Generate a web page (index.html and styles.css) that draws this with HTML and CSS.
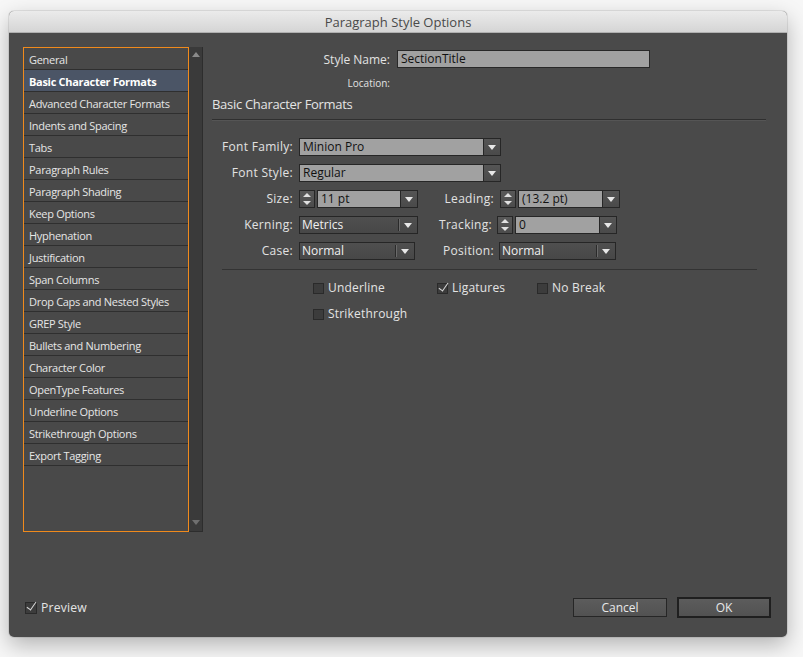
FILE: index.html
```html
<!DOCTYPE html>
<html>
<head>
<meta charset="utf-8">
<link rel="stylesheet" href="styles.css">
</head>
<body>
<div class="window">
  <div class="titlebar">Paragraph Style Options</div>
  <div class="body">
    <div class="top">
      <div class="sidebar">
        <ul class="list">
          <li>General</li>
          <li class="sel">Basic Character Formats</li>
          <li>Advanced Character Formats</li>
          <li>Indents and Spacing</li>
          <li>Tabs</li>
          <li>Paragraph Rules</li>
          <li>Paragraph Shading</li>
          <li>Keep Options</li>
          <li>Hyphenation</li>
          <li>Justification</li>
          <li>Span Columns</li>
          <li>Drop Caps and Nested Styles</li>
          <li>GREP Style</li>
          <li>Bullets and Numbering</li>
          <li>Character Color</li>
          <li>OpenType Features</li>
          <li>Underline Options</li>
          <li>Strikethrough Options</li>
          <li>Export Tagging</li>
        </ul>
        <div class="scroll">
          <span class="sarrow up"></span>
          <span class="sarrow down"></span>
        </div>
      </div>
      <div class="main">
        <div class="namerow">
          <span class="namelabel">Style Name:</span>
          <div class="nameinput">SectionTitle</div>
        </div>
        <div class="locrow">
          <span class="namelabel small">Location:</span>
        </div>
        <h2 class="heading">Basic Character Formats</h2>
        <div class="rule"></div>
        <div class="form">
          <span class="lbl">Font Family:</span>
          <div class="combo wide"><span class="val">Minion Pro</span><span class="arr"></span></div>

          <span class="lbl">Font Style:</span>
          <div class="combo wide"><span class="val">Regular</span><span class="arr"></span></div>

          <span class="lbl">Size:</span>
          <div class="spinwrap"><span class="spin"></span><div class="combo w101"><span class="val">11 pt</span><span class="arr"></span></div></div>
          <span class="lbl">Leading:</span>
          <div class="spinwrap"><span class="spin"></span><div class="combo w102"><span class="val">(13.2 pt)</span><span class="arr"></span></div></div>

          <span class="lbl">Kerning:</span>
          <div class="select w119"><span class="val">Metrics</span><span class="sep"></span><span class="arr"></span></div>
          <span class="lbl shiftl">Tracking:</span>
          <div class="spinwrap shift"><span class="spin"></span><div class="combo w102"><span class="val">0</span><span class="arr"></span></div></div>

          <span class="lbl">Case:</span>
          <div class="select w116"><span class="val">Normal</span><span class="sep"></span><span class="arr"></span></div>
          <span class="lbl">Position:</span>
          <div class="select w117 shift1"><span class="val">Normal</span><span class="sep"></span><span class="arr"></span></div>
        </div>
        <div class="rule2"></div>
        <div class="checks">
          <label class="cb"><span class="box"></span>Underline</label>
          <label class="cb lig"><span class="box on"></span>Ligatures</label>
          <label class="cb"><span class="box"></span>No Break</label>
          <label class="cb row2"><span class="box"></span>Strikethrough</label>
        </div>
      </div>
    </div>
    <div class="footer">
      <label class="cb preview"><span class="box on"></span>Preview</label>
      <div class="buttons">
        <button class="btn">Cancel</button>
        <button class="btn ok">OK</button>
      </div>
    </div>
  </div>
</div>
</body>
</html>
```

FILE: styles.css
```css
* { box-sizing: border-box; }
html, body { margin: 0; padding: 0; }
body {
  background: #f7f7f7;
  width: 803px;
  height: 657px;
  overflow: hidden;
  font-family: "Open Sans", "DejaVu Sans", sans-serif;
  color: #e2e2e2;
}
.window {
  margin: 11px 0 0 9px;
  width: 778px;
  height: 626px;
  border-radius: 5px;
  overflow: hidden;
  display: flex;
  flex-direction: column;
  box-shadow: 0 8px 22px rgba(0,0,0,0.28), 0 0 0 1px rgba(0,0,0,0.08);
  background: #4a4a4a;
}
.titlebar {
  height: 22px;
  background: linear-gradient(#ebebeb, #d5d5d5);
  border-bottom: 1px solid #b0b0b0;
  color: #4a4a4a;
  font-size: 13px;
  line-height: 22px;
  text-align: center;
}
.body {
  flex: 1;
  display: flex;
  flex-direction: column;
  padding: 14px 16px 19px 14px;
}
.top {
  display: flex;
  flex: 1;
}
.sidebar {
  width: 180px;
  height: 485px;
  display: flex;
  background: #333;
  border: 1px solid #2d2d2d;
  border-left: none;
  border-top: none;
}
.list {
  list-style: none;
  margin: 0;
  padding: 0;
  width: 166px;
  height: 485px;
  border: 1px solid #f08a1c;
  background: #494949;
}
.list li {
  height: 22px;
  padding-top: 2px;
  line-height: 19px;
  border-bottom: 1px solid #2f2f2f;
  padding-left: 5px;
  font-size: 11px;
  letter-spacing: -0.3px;
  color: #e6e6e6;
  white-space: nowrap;
}
.list li.sel {
  background: #4b5566;
  font-weight: 700;
  color: #fff;
}
.scroll {
  flex: 1;
  background: #3a3a3a;
  position: relative;
}
.sarrow {
  position: absolute;
  left: 3px;
  width: 0;
  height: 0;
  border-left: 4px solid transparent;
  border-right: 4px solid transparent;
}
.sarrow.up { top: 5px; border-bottom: 5px solid #8a8a8a; }
.sarrow.down { bottom: 6px; border-top: 5px solid #6f6f6f; }

.main {
  flex: 1;
  padding-top: 3px;
}
.namerow, .locrow {
  display: flex;
  align-items: center;
}
.namelabel {
  width: 187px;
  text-align: right;
  font-size: 12px;
  margin-right: 7px;
}
.namelabel.small { font-size: 10px; }
.nameinput {
  width: 253px;
  height: 18px;
  background: #a1a1a1;
  border: 1px solid #282828;
  color: #111;
  font-size: 12px;
  line-height: 16px;
  padding-left: 3px;
}
.locrow { margin-top: 8px; height: 14px; }
.heading {
  margin: 5px 0 0 9px;
  font-size: 13px;
  font-weight: 400;
  letter-spacing: -0.3px;
  line-height: 18px;
  color: #e4e4e4;
}
.rule {
  margin: 6px 5px 0 9px;
  background: #2f2f2f;
  border-bottom: 1px solid #555;
  height: 2px;
}
.form {
  margin: 17px 0 0 19px;
  display: grid;
  grid-template-columns: 71px 119px 70px auto;
  column-gap: 6px;
  row-gap: 8px;
  align-items: center;
}
.lbl {
  text-align: right;
  font-size: 12px;
  letter-spacing: 0.3px;
  white-space: nowrap;
  line-height: 18px;
}
.lbl.shiftl { margin-right: 2px; }
.combo, .select {
  height: 18px;
  display: flex;
  border: 1px solid #262626;
  font-size: 12px;
  line-height: 16px;
}
.combo { background: #a1a1a1; color: #111; }
.combo .val { flex: 1; padding-left: 3px; white-space: nowrap; }
.combo .arr, .select .arr {
  width: 17px;
  position: relative;
}
.combo .arr {
  background: linear-gradient(#555, #4a4a4a);
  border-left: 1px solid #262626;
}
.arr::after {
  content: "";
  position: absolute;
  left: 4px;
  top: 6px;
  border-left: 4px solid transparent;
  border-right: 4px solid transparent;
  border-top: 5px solid #e8e8e8;
}
.wide { grid-column: 2 / span 3; width: 202px; }
.w101 { width: 101px; }
.w102 { width: 102px; }
.w119 { width: 119px; }
.w116 { width: 116px; }
.w117 { width: 117px; }
.shift1 { margin-left: -1px; }
.select {
  background: linear-gradient(#4f4f4f, #474747);
  color: #f0f0f0;
}
.select .val { flex: 1; padding-left: 2px; }
.select .sep {
  width: 2px;
  margin: 2px 0;
  border-left: 1px solid #2a2a2a;
  border-right: 1px solid #6a6a6a;
}
.spinwrap { display: flex; gap: 2px; }
.spinwrap.shift { margin-left: -3px; }
.spin {
  width: 16px;
  height: 18px;
  border: 1px solid #262626;
  background: linear-gradient(#595959, #4c4c4c);
  position: relative;
}
.spin::before, .spin::after {
  content: "";
  position: absolute;
  left: 3px;
  border-left: 4px solid transparent;
  border-right: 4px solid transparent;
}
.spin::before { top: 2px; border-bottom: 4px solid #e0e0e0; }
.spin::after { bottom: 2px; border-top: 4px solid #e0e0e0; }
.rule2 {
  margin: 9px 0 0 19px;
  width: 535px;
  height: 1px;
  background: #333;
}
.checks {
  margin: 9px 0 0 110px;
  display: grid;
  grid-template-columns: 124px 100px auto;
  row-gap: 8px;
}
.cb {
  display: flex;
  align-items: center;
  gap: 4px;
  font-size: 12px;
  letter-spacing: 0.2px;
  line-height: 18px;
  color: #e4e4e4;
}
.row2 { grid-column: 1 / span 3; }
.box {
  width: 11px;
  height: 11px;
  background: #3c3c3c;
  border: 1px solid #2a2a2a;
  position: relative;
}
.box.on::after {
  content: "";
  position: absolute;
  left: 3px;
  top: -3px;
  width: 4px;
  height: 9px;
  border-right: 1.5px solid #d8d8d8;
  border-bottom: 1.5px solid #d8d8d8;
  transform: rotate(35deg);
}
.footer {
  display: flex;
  justify-content: space-between;
  align-items: center;
  height: 22px;
}
.preview { font-size: 12.2px; margin-left: 2px; padding-top: 1px; }
.preview .box { width: 12px; height: 12px; }
.buttons { display: flex; gap: 10px; align-items: center; }
.btn {
  font-family: "Open Sans", "DejaVu Sans", sans-serif;
  font-size: 12px;
  color: #e8e8e8;
  width: 94px;
  height: 19px;
  padding: 0;
  border: 1px solid #262626;
  background: linear-gradient(#5c5c5c, #525252);
  line-height: 17px;
}
.btn.ok {
  height: 21px;
  border: 2px solid #1f1f1f;
}
```
